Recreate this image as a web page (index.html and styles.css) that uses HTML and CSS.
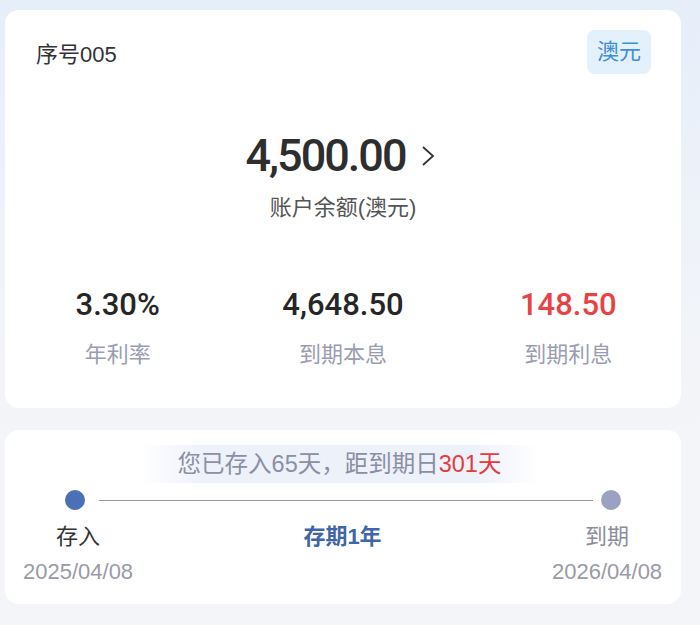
FILE: index.html
```html
<!DOCTYPE html>
<html lang="zh-CN">
<head>
  <meta charset="UTF-8">
  <meta name="viewport" content="width=device-width, initial-scale=1.0">
  <title>定期存款详情</title>
  <link rel="stylesheet" href="styles.css">
</head>
<body>
  <div class="page">
    <div class="card summary">
      <div class="summary-head">
        <span class="serial">序号005</span>
        <span class="currency-tag">澳元</span>
      </div>

      <div class="balance">
        <div class="balance-amount">
          <span>4,500.00</span>
          <svg class="chevron" width="14" height="22" viewBox="0 0 14 22">
            <path d="M2 2 L12 11 L2 20" fill="none" stroke="#333" stroke-width="1.8"/>
          </svg>
        </div>
        <div class="balance-label">账户余额(澳元)</div>
      </div>

      <div class="stats">
        <div class="stat">
          <div class="stat-value">3.30%</div>
          <div class="stat-label">年利率</div>
        </div>
        <div class="stat">
          <div class="stat-value">4,648.50</div>
          <div class="stat-label">到期本息</div>
        </div>
        <div class="stat">
          <div class="stat-value red">148.50</div>
          <div class="stat-label">到期利息</div>
        </div>
      </div>
    </div>

    <div class="card term">
      <div class="term-tip">
        <span>您已存入65天，距到期日<em>301天</em></span>
      </div>

      <div class="timeline">
        <span class="dot dot-start"></span>
        <span class="line"></span>
        <span class="dot dot-end"></span>
      </div>

      <div class="term-grid">
        <div class="term-name">存入</div>
        <div class="term-length">存期1年</div>
        <div class="term-name muted">到期</div>
        <div class="term-date">2025/04/08</div>
        <div></div>
        <div class="term-date">2026/04/08</div>
      </div>
    </div>
  </div>
</body>
</html>
```

FILE: styles.css
```css
/* Deposit detail page */
body {
  margin: 0;
  font-family: "Liberation Sans", "Noto Sans CJK SC", sans-serif;
  background: linear-gradient(180deg, #e6eefa 0%, #eef2f9 35%, #f4f5f8 70%, #f4f5f8 100%);
  min-height: 625px;
}
.page {
  display: flex;
  flex-direction: column;
  gap: 22px;
  padding: 10px 19px 0 5px;
}
.card {
  background: #fff;
  border-radius: 14px;
}
.summary {
  padding: 20px 0 38px;
}
.summary-head {
  display: flex;
  justify-content: space-between;
  align-items: center;
  padding: 0 30px 0 31px;
}
.serial {
  font-size: 22px;
  color: #333;
}
.currency-tag {
  width: 64px;
  height: 44px;
  line-height: 44px;
  text-align: center;
  font-size: 22px;
  color: #3d8fd8;
  background: #e3f1fc;
  border-radius: 8px;
}
.balance {
  display: flex;
  flex-direction: column;
  align-items: center;
  margin-top: 54px;
}
.balance-amount {
  display: flex;
  align-items: center;
  gap: 15px;
  height: 54px;
  font-family: Roboto, "Liberation Sans", sans-serif;
  font-weight: 500;
  font-size: 45px;
  letter-spacing: -2px;
  color: #2e2e2e;
  margin-left: -6px;
}
.chevron {
  margin-top: 2px;
}
.balance-label {
  margin-top: 11px;
  font-size: 22px;
  line-height: 30px;
  color: #555;
}
.stats {
  display: grid;
  grid-template-columns: repeat(3, 1fr);
  margin-top: 62px;
  text-align: center;
}
.stat-value {
  font-family: Roboto, "Liberation Sans", sans-serif;
  font-weight: 500;
  font-size: 31px;
  line-height: 40px;
  color: #262626;
}
.stat-value.red {
  color: #e84242;
}
.stat-label {
  margin-top: 15px;
  font-size: 22px;
  line-height: 30px;
  color: #9a9db0;
}
.term {
  padding: 15px 19px 17px 18px;
}
.term-tip {
  display: flex;
  justify-content: center;
}
.term-tip span {
  padding: 0 38px;
  height: 38px;
  line-height: 38px;
  font-size: 23.5px;
  color: #8a8fa3;
  background: linear-gradient(90deg, rgba(236, 241, 250, 0) 0%, #edf1fa 16%, #edf1fa 84%, rgba(236, 241, 250, 0) 100%);
  border-radius: 6px;
  margin-left: -6px;
}
.term-tip em {
  font-style: normal;
  color: #e53b3b;
}
.timeline {
  display: flex;
  align-items: center;
  margin-top: 7px;
  padding: 0 41px 0 42px;
}
.dot {
  width: 20px;
  height: 20px;
  border-radius: 50%;
}
.dot-start {
  background: #4a70b8;
}
.dot-end {
  background: #9ba1c0;
}
.line {
  flex: 1;
  height: 1px;
  background: #9a9a9a;
  margin: 0 8px 0 14px;
}
.term-grid {
  display: grid;
  grid-template-columns: 110px 1fr 110px;
  row-gap: 5px;
  margin-top: 12px;
  text-align: center;
}
.term-name {
  font-size: 22px;
  line-height: 30px;
  color: #333;
}
.term-name.muted {
  color: #8a8d9a;
}
.term-length {
  font-size: 22px;
  line-height: 30px;
  font-weight: bold;
  color: #4066a8;
}
.term-date {
  font-size: 22px;
  line-height: 30px;
  color: #999ba6;
}
```
